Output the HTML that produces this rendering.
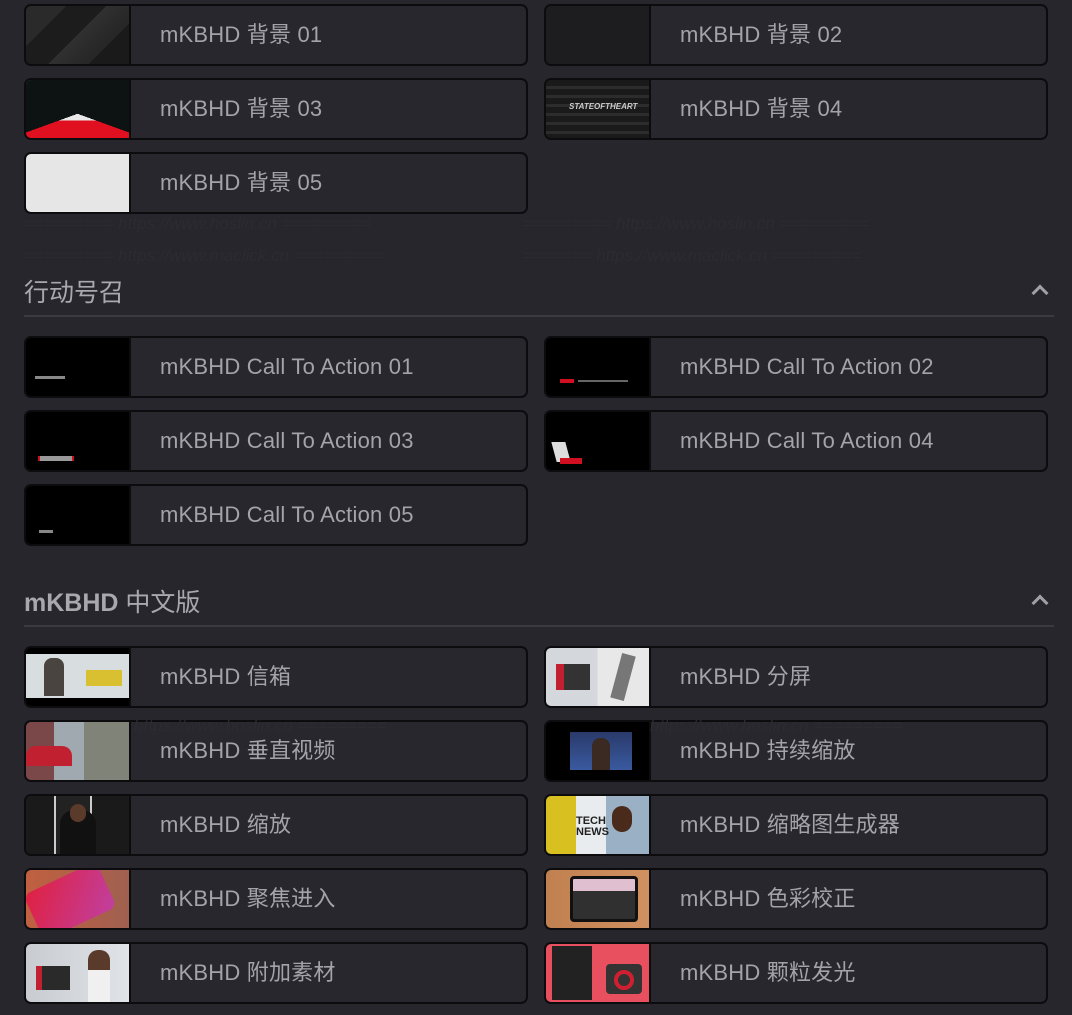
<!DOCTYPE html>
<html><head><meta charset="utf-8"><style>
*{margin:0;padding:0;box-sizing:border-box}
body{width:1072px;height:1015px;background:#26262c;position:relative;overflow:hidden;font-family:"Liberation Sans","Noto Sans CJK SC",sans-serif}
.c{position:absolute;width:504px;height:62px;border:2px solid #0c0c0e;border-radius:7px;background:#27272d;overflow:hidden}
.t{position:absolute;left:0;top:0;width:105px;height:58px;border-right:2px solid #0c0c0e}
.l{position:absolute;left:134px;top:0;line-height:58px;font-size:22px;color:#a3a3a8;letter-spacing:0.2px}
.h{position:absolute;left:24px;font-size:25px;color:#a8a8ad}
.hl{position:absolute;left:24px;width:1030px;height:2px;background:#3a3a3f}
.ch{position:absolute;left:1034px;width:12px;height:12px;border-left:3px solid #a0a0a5;border-top:3px solid #a0a0a5;transform:rotate(45deg)}
.wm{position:absolute;font-size:17px;color:#2b2b31;font-style:italic;white-space:nowrap}
</style></head><body>
<div class="wm" style="left:24px;top:214px">========= https://www.hoslin.cn =========</div>
<div class="wm" style="left:522px;top:214px">========= https://www.hoslin.cn =========</div>
<div class="wm" style="left:24px;top:246px">========= https://www.maclick.cn =========</div>
<div class="wm" style="left:522px;top:246px">======= https://www.maclick.cn =========</div>

<div class="c" style="left:24px;top:4px"><div class="t" style="background:linear-gradient(135deg,#2a2a2a 25%,#1c1c1c 25%,#1c1c1c 50%,#303030 50%,#262626 75%,#1a1a1a 75%)"></div><div class="l">mKBHD 背景 01</div></div>
<div class="c" style="left:544px;top:4px"><div class="t" style="background:#1d1d1f"></div><div class="l">mKBHD 背景 02</div></div>
<div class="c" style="left:24px;top:78px"><div class="t" style="background:linear-gradient(160deg,#0d1212 55%,transparent 55%),linear-gradient(20deg,transparent 45%,#0d1212 45%),linear-gradient(#e8e8e8 70%,#e01020 70%)"></div><div class="l">mKBHD 背景 03</div></div>
<div class="c" style="left:544px;top:78px"><div class="t" style="background:repeating-linear-gradient(#1a1a1a 0 6px,#2c2c2c 6px 9px)"><div style="position:absolute;left:23px;top:22px;font-size:8px;font-weight:bold;font-style:italic;color:#ccc">STATEOFTHEART</div></div><div class="l">mKBHD 背景 04</div></div>
<div class="c" style="left:24px;top:152px"><div class="t" style="background:#e6e6e6"></div><div class="l">mKBHD 背景 05</div></div>

<div class="h" style="top:273px">行动号召</div><div class="ch" style="top:287px"></div>
<div class="hl" style="top:315px"></div>

<div class="c" style="left:24px;top:336px"><div class="t" style="background:#000"><div style="position:absolute;left:9px;top:38px;width:30px;height:3px;background:#888"></div></div><div class="l">mKBHD Call To Action 01</div></div>
<div class="c" style="left:544px;top:336px"><div class="t" style="background:#000"><div style="position:absolute;left:14px;top:41px;width:14px;height:4px;background:#d01020"></div><div style="position:absolute;left:32px;top:42px;width:50px;height:2px;background:#666"></div></div><div class="l">mKBHD Call To Action 02</div></div>
<div class="c" style="left:24px;top:410px"><div class="t" style="background:#000"><div style="position:absolute;left:12px;top:44px;width:36px;height:5px;background:#999;border-left:2px solid #d01020;border-right:2px solid #d01020"></div></div><div class="l">mKBHD Call To Action 03</div></div>
<div class="c" style="left:544px;top:410px"><div class="t" style="background:#000"><div style="position:absolute;left:8px;top:30px;width:14px;height:20px;background:#ddd;transform:skewX(15deg)"></div><div style="position:absolute;left:14px;top:46px;width:22px;height:6px;background:#d01020"></div></div><div class="l">mKBHD Call To Action 04</div></div>
<div class="c" style="left:24px;top:484px"><div class="t" style="background:#000"><div style="position:absolute;left:13px;top:44px;width:14px;height:3px;background:#888"></div></div><div class="l">mKBHD Call To Action 05</div></div>

<div class="h" style="top:583px;font-weight:bold">mKBHD <span style="font-weight:normal">中文版</span></div><div class="ch" style="top:597px"></div>
<div class="hl" style="top:625px"></div>

<div class="c" style="left:24px;top:646px"><div class="t" style="background:linear-gradient(#000 0 6px,#d8dde0 6px 50px,#000 50px)"><div style="position:absolute;left:18px;top:10px;width:20px;height:38px;background:#4a4440;border-radius:8px 8px 0 0"></div><div style="position:absolute;left:60px;top:22px;width:36px;height:16px;background:#d8c030"></div></div><div class="l">mKBHD 信箱</div></div>
<div class="c" style="left:544px;top:646px"><div class="t" style="background:linear-gradient(90deg,#d4d8dc 50%,#e8e8e8 50%)"><div style="position:absolute;left:10px;top:16px;width:34px;height:26px;background:#333;border-left:8px solid #c02030"></div><div style="position:absolute;left:70px;top:6px;width:14px;height:46px;background:#777;transform:rotate(15deg)"></div></div><div class="l">mKBHD 分屏</div></div>
<div class="c" style="left:24px;top:720px"><div class="t" style="background:linear-gradient(90deg,#7a4848 0 28px,#a0a8b0 28px 58px,#808478 58px)"><div style="position:absolute;left:0;top:24px;width:46px;height:20px;background:#c02030;border-radius:10px 10px 0 0"></div></div><div class="l">mKBHD 垂直视频</div></div>
<div class="c" style="left:544px;top:720px"><div class="t" style="background:#000"><div style="position:absolute;left:24px;top:10px;width:62px;height:38px;background:linear-gradient(#2a3a6a,#3a5aa0)"></div><div style="position:absolute;left:46px;top:16px;width:18px;height:32px;background:#3a2a22;border-radius:8px 8px 0 0"></div></div><div class="l">mKBHD 持续缩放</div></div>
<div class="c" style="left:24px;top:794px"><div class="t" style="background:linear-gradient(90deg,#1a1a1a 0 28px,#ccc 28px 30px,#222 30px 64px,#ccc 64px 66px,#1a1a1a 66px)"><div style="position:absolute;left:34px;top:14px;width:36px;height:44px;background:#111;border-radius:14px 14px 0 0"></div><div style="position:absolute;left:44px;top:8px;width:16px;height:18px;background:#5a3a2a;border-radius:8px"></div></div><div class="l">mKBHD 缩放</div></div>
<div class="c" style="left:544px;top:794px"><div class="t" style="background:linear-gradient(90deg,#d8c020 0 30px,#e8ecee 30px 60px,#9ab0c4 60px)"><div style="position:absolute;left:30px;top:20px;font-size:11px;font-weight:bold;color:#222;line-height:11px">TECH<br>NEWS</div><div style="position:absolute;left:66px;top:10px;width:20px;height:26px;background:#4a2a1a;border-radius:10px"></div></div><div class="l">mKBHD 缩略图生成器</div></div>
<div class="c" style="left:24px;top:868px"><div class="t" style="background:linear-gradient(90deg,#c06040,#a06050)"><div style="position:absolute;left:4px;top:6px;width:80px;height:50px;background:linear-gradient(135deg,#e02040,#c040a0);border-radius:8px;transform:rotate(-25deg)"></div></div><div class="l">mKBHD 聚焦进入</div></div>
<div class="c" style="left:544px;top:868px"><div class="t" style="background:linear-gradient(90deg,#c08050,#d09060)"><div style="position:absolute;left:24px;top:6px;width:68px;height:46px;background:linear-gradient(#e0c0d0 0 30%,#303030 30%);border:3px solid #111;border-radius:4px"></div></div><div class="l">mKBHD 色彩校正</div></div>
<div class="c" style="left:24px;top:942px"><div class="t" style="background:linear-gradient(90deg,#c8ccd0,#e0e4e8)"><div style="position:absolute;left:10px;top:22px;width:34px;height:24px;background:#2a2a2a;border-left:6px solid #c02030"></div><div style="position:absolute;left:62px;top:6px;width:22px;height:52px;background:linear-gradient(#5a3a2a 0 20px,#f0f0f0 20px);border-radius:10px 10px 0 0"></div></div><div class="l">mKBHD 附加素材</div></div>
<div class="c" style="left:544px;top:942px"><div class="t" style="background:#e85060"><div style="position:absolute;left:6px;top:2px;width:40px;height:54px;background:#222"></div><div style="position:absolute;left:60px;top:20px;width:36px;height:30px;background:#333;border-radius:4px"></div><div style="position:absolute;left:68px;top:26px;width:20px;height:20px;border:4px solid #d02030;border-radius:50%"></div></div><div class="l">mKBHD 颗粒发光</div></div>

<div class="wm" style="left:134px;top:716px">https://www.hoslin.cn =========</div>
<div class="wm" style="left:650px;top:716px">https://www.hoslin.cn =========</div>
</body></html>
